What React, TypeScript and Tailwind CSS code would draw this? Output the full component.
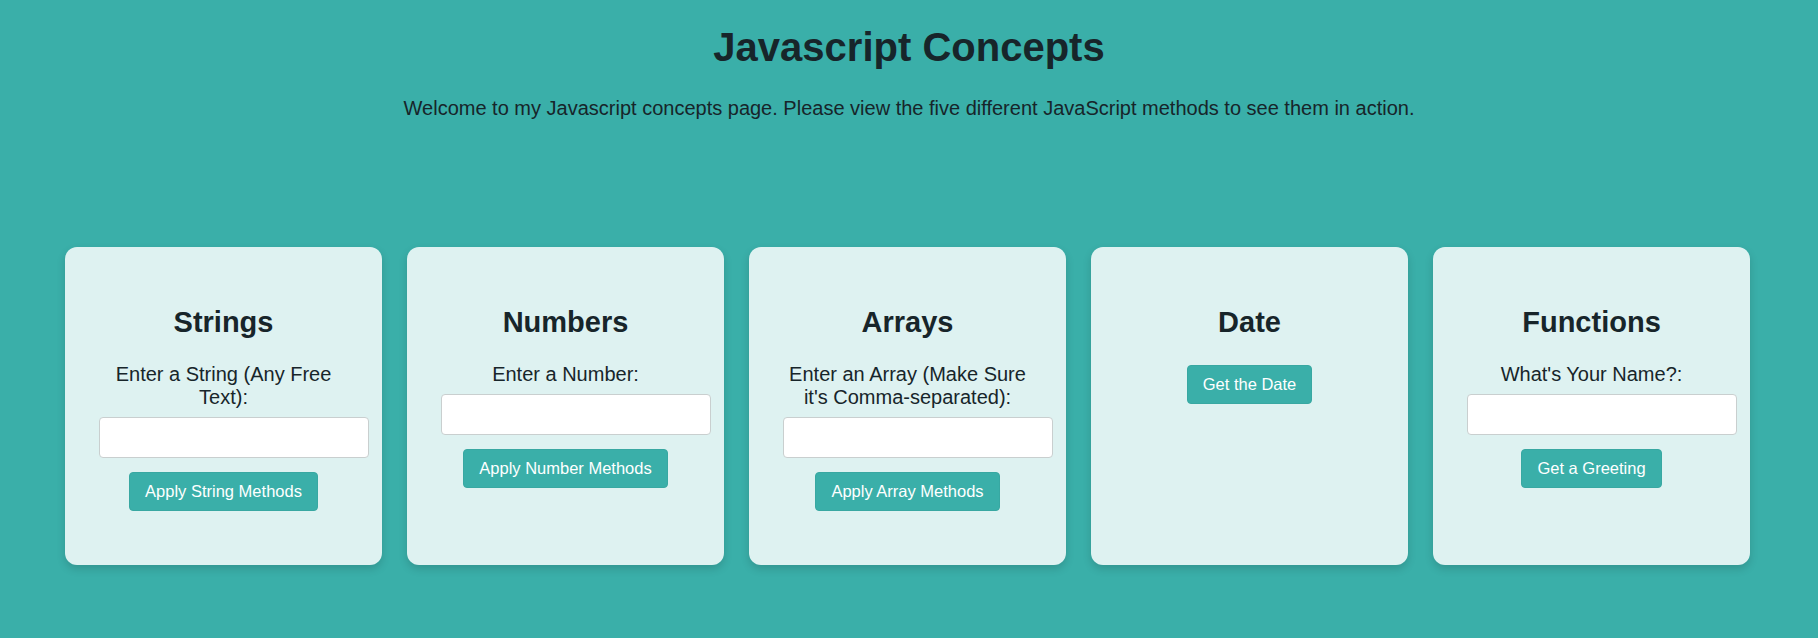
import React from "react";

const font = { fontFamily: '"Liberation Sans", Arial, sans-serif' };

function Card({
  title,
  label,
  button,
  input = true,
}: {
  title: string;
  label?: string;
  button: string;
  input?: boolean;
}) {
  return (
    <div className="w-[317px] h-[318px] shrink-0 rounded-[12px] bg-[#def2f1] px-[34px] pt-[35px] text-center shadow-[0_4px_8px_rgba(0,0,0,0.15)]">
      <h2 className="m-0 mt-[24px] mb-[24px] text-[29px] leading-[33px] font-bold text-[#17252a]">
        {title}
      </h2>
      {label && (
        <div className="text-[20px] leading-[23px] text-[#17252a]">{label}</div>
      )}
      {input && (
        <input
          type="text"
          className="mt-[8px] block w-[270px] h-[41px] rounded-[4px] border border-[#c9cfcf] bg-white outline-none"
        />
      )}
      <button
        className={`${input ? "mt-[14px]" : "mt-[2px]"} rounded-[4px] bg-[#3aafa9] px-[15px] h-[39px] text-[16.5px] leading-[19px] text-[#feffff] border border-[#38a8a2]`}
      >
        {button}
      </button>
    </div>
  );
}

export default function App() {
  return (
    <div style={font} className="min-h-[638px] w-full bg-[#3aafa9] pt-[24px]">
      <h1 className="m-0 text-center text-[40px] leading-[46px] font-bold text-[#17252a]">
        Javascript Concepts
      </h1>
      <p className="m-0 mt-[27px] text-center text-[20px] leading-[23px] text-[#17252a]">
        Welcome to my Javascript concepts page. Please view the five different JavaScript methods to see them in action.
      </p>
      <div className="mt-[127px] flex justify-start gap-[25px] pl-[65px]">
        <Card title="Strings" label="Enter a String (Any Free Text):" button="Apply String Methods" />
        <Card title="Numbers" label="Enter a Number:" button="Apply Number Methods" />
        <Card
          title="Arrays"
          label="Enter an Array (Make Sure it's Comma-separated):"
          button="Apply Array Methods"
        />
        <Card title="Date" button="Get the Date" input={false} />
        <Card title="Functions" label="What's Your Name?:" button="Get a Greeting" />
      </div>
    </div>
  );
}
